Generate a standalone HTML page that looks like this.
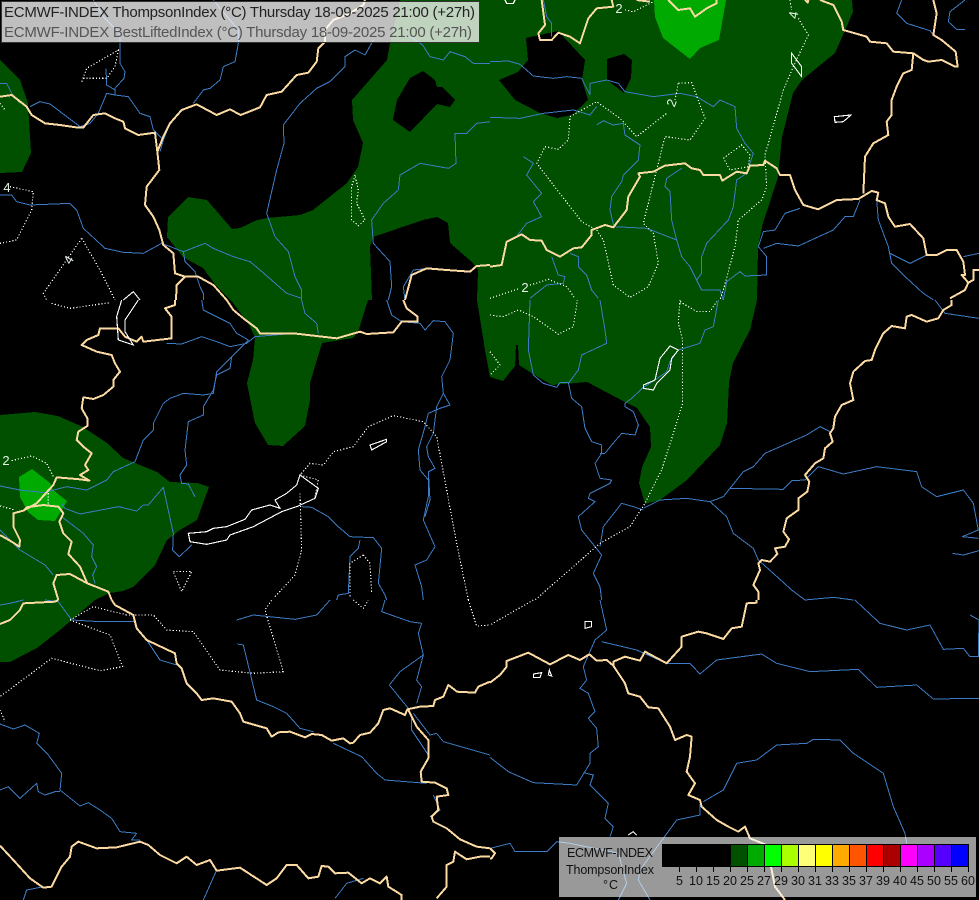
<!DOCTYPE html>
<html><head><meta charset="utf-8"><title>ECMWF-INDEX ThompsonIndex</title>
<style>
html,body{margin:0;padding:0;background:#000;width:979px;height:900px;overflow:hidden}
svg{display:block;position:absolute;left:0;top:0}
text{font-family:"Liberation Sans",sans-serif}
.r path{fill:none;stroke:#3d7cc4;stroke-width:3;stroke-linejoin:round;shape-rendering:crispEdges}
.d path{fill:none;stroke:#fff;stroke-width:3.5;stroke-dasharray:3.5 6;shape-rendering:crispEdges}
.b path{fill:none;stroke:#fbd9a2;stroke-width:6;stroke-linejoin:round;shape-rendering:crispEdges}
.l path{fill:none;stroke:#fff;stroke-width:3.4;shape-rendering:crispEdges}
</style></head><body>
<svg width="979" height="900" viewBox="0 0 979 900" xmlns="http://www.w3.org/2000/svg">
<rect width="979" height="900" fill="#000"/>
<g shape-rendering="crispEdges">
<path fill="#005000" fill-rule="evenodd" d="M400,0 390,43 387,60 352,100 353,120 363,143 358,167 347,183 313,210 300,215 267,218 257,220 240,228 232,229 207,200 188,197 168,217 167,237 183,257 203,268 217,287 233,303 248,323 255,337 253,360 247,383 255,423 268,445 283,446 305,426 310,400 310,383 322,343 353,338 358,332 368,300 372,300 370,247 373,237 423,220 437,217 448,223 450,243 473,263 478,270 477,300 485,350 490,377 503,381 515,366 516,345 518,345 519,365 533,374 552,385 587,382 625,402 637,408 650,427 651,447 642,467 639,483 645,504 660,500 687,480 720,445 727,423 729,383 733,363 750,330 757,300 758,247 763,223 778,177 782,137 793,93 802,80 835,53 853,12 852,0Z
M423,71 435,80 437,87 442,87 455,100 450,107 437,104 410,132 393,120 397,100 410,78Z
M558,31 585,60 582,80 588,100 572,115 557,118 540,113 515,100 499,80 518,72 528,60 526,38Z
M607,59 624,54 632,60 631,78 624,93 607,80Z"/>
<path fill="#00aa00" d="M654,0 655,17 663,38 690,59 700,48 719,40 722,23 726,0Z"/>
<path fill="#005000" d="M0,60 20,80 28,103 31,153 22,172 0,173Z"/>
<path fill="#005000" d="M0,415 35,412 58,416 83,427 107,443 123,458 157,472 170,482 197,483 209,487 197,520 180,530 167,540 155,565 133,587 123,591 110,593 95,600 60,630 37,648 10,662 0,662Z"/>
<path fill="#00aa00" d="M19,477 32,469 50,483 53,490 67,501 60,513 55,521 38,520 28,512 20,497Z"/>
</g>

<!-- zone 1 -->
<g transform="scale(.33333)">
<g class="r">
<path d="M360,130 360,190 375,215 372,235 345,265 345,285 320,280 295,340 270,370 240,380"/>
<path d="M318,205 320,255 345,270"/>
<path d="M345,285 385,290 420,340 450,350 460,390 490,420 480,455"/>
<path d="M90,320 120,305 150,312 240,380"/>
<path d="M640,0 715,90 715,130 705,185 670,200 660,240 630,265 610,270 580,310"/>
<path d="M510,370 490,420"/>
<path d="M1120,120 1095,165 1065,150 1035,170 1035,200 990,245 950,265 900,310 850,375 852,430 830,510 800,640 825,710 865,755 885,830 905,870 905,900"/>
<path d="M0,585 35,585 50,605 90,615 210,610 230,630 250,685 315,745 370,757 430,760 485,730 550,755 615,730 640,745 700,770 750,785 780,810 820,845 860,880 905,895"/>
<path d="M0,250 20,250 35,280 60,310"/>
<path d="M550,755 555,785 585,815 600,860 610,880 610,900"/>
<path d="M1470,190 1420,190 1395,170 1350,155 1330,180 1290,170 1268,135 1230,110"/>
<path d="M1470,365 1430,370 1400,400 1365,400 1368,490 1345,505 1260,490 1200,525 1195,570 1150,610 1115,660 1120,730 1170,785 1175,860 1165,900"/>
<path d="M1215,900 1210,860 1240,810 1290,805"/>
<path d="M360,130 360,100 310,50 280,0"/>
</g>
<g class="d">
<path d="M245,245 260,205 355,150 345,200 320,235 250,235"/>
<path d="M30,560 100,575 95,630 50,720 0,730"/>
<path d="M245,715 130,880 140,900"/>
<path d="M245,715 300,810 345,900"/>
<path d="M1065,525 1055,560 1055,660 1075,677 1095,660 1070,610 1075,570Z"/>
<path d="M0,310 15,330"/>
</g>
<g class="b">
<path d="M0,290 35,285 80,320 95,345 135,370 180,375 235,383 250,383 280,345 315,340 345,355 370,365 375,385 415,405 465,398 472,455 478,510 440,560 435,615 460,650 478,690 490,735 520,760 525,820 555,830 595,830 640,855 680,900"/>
<path d="M472,455 490,410 510,370 545,330 590,313 650,345 690,328 722,345 780,322 800,285 845,275 890,225 925,218 950,185 955,145 975,125 975,90 1000,60 1050,40 1090,15 1095,0"/>
<path d="M555,830 530,855 528,900"/>
<path d="M1215,900 1235,825 1280,805 1340,810 1410,815 1430,798 1470,795"/>
</g>
<g class="l"><path d="M370,900 400,875 420,900"/></g>
</g>

<!-- zone 3 -->
<g transform="translate(490,0) scale(.33333)">
<g class="r">
<path d="M0,185 55,183 90,193 130,228 190,235 230,230 275,235 300,285"/>
<path d="M300,285 300,250 350,240 385,250 405,275 490,290 570,280 620,290 670,320 690,300 735,320 740,385 765,430 790,460 770,520 740,540 730,620 715,660 650,730 635,770 635,820 620,840 635,870 690,870 700,900"/>
<path d="M0,352 90,355 160,340 250,330 300,345 320,320"/>
<path d="M320,375 340,362 370,375 400,370 405,405 450,435 445,480 400,525 395,545 365,590 360,630 372,680"/>
<path d="M372,680 470,685 560,720 545,660 540,575 525,560 530,535 575,505"/>
<path d="M560,720 575,770 600,800 620,840"/>
<path d="M100,470 130,490 110,525 155,580 130,605 155,650 110,670 75,715"/>
<path d="M185,770 205,825 225,830 220,850 170,855 120,895"/>
<path d="M240,760 265,770 265,800 290,825 305,870 325,895"/>
<path d="M700,900 710,845 750,815 765,828 830,825 830,770 805,740 820,695 855,690 885,640 930,625"/>
<path d="M820,745 860,730 925,738 1030,690 1065,650 1090,650 1110,600"/>
<path d="M1160,600 1165,660 1195,740 1205,790 1240,825 1300,880 1330,900"/>
<path d="M1200,760 1260,790 1300,770 1310,765"/>
<path d="M1420,770 1467,760"/>
<path d="M1235,0 1220,40 1250,70 1320,92 1330,105"/>
<path d="M1425,0 1380,35 1375,65 1400,88 1425,88"/>
<path d="M1355,120 1397,155 1403,200"/>
<path d="M160,0 170,50 185,70 185,110"/>
</g>
<g class="d">
<path d="M565,250 605,248 645,355 600,420 525,410 460,670 490,700 505,790 475,860 420,892 370,855 340,720 320,690 275,665 140,490 165,440 205,448 235,420 240,350 320,305 390,355 440,410 530,340"/>
<path d="M555,300 565,250"/>
<path d="M900,0 905,30 M925,55 955,105 910,200 880,270 825,465 830,560 815,600 745,660 735,740 700,870 690,900"/>
<path d="M700,475 755,435 780,465 775,500 720,510 700,475"/>
<path d="M0,895 90,865 M120,855 175,838 230,860 255,895"/>
<path d="M405,30 430,35 490,5"/>
</g>
<g class="b">
<path d="M0,800 35,795 50,725 95,703 120,720 155,722 170,750 210,770 250,745 275,742 305,705 305,690 345,675 370,682 410,630 415,590 450,530 445,520 490,515 525,497 585,490 605,505 630,510 640,525 690,525 697,542 740,515 770,520 780,497 820,495 825,482 860,505 870,525 900,525 915,570 940,615 985,628 1040,600 1105,597 1145,573 1165,578 1160,600 1185,610 1195,650 1215,680 1260,672 1300,715 1310,765 1340,765 1370,750 1400,750 1420,785 1425,825 1415,825 1435,848 1450,840 1450,810 1467,810"/>
<path d="M1435,848 1425,870 1380,895"/>
<path d="M990,0 1030,15 1055,65 1060,90 1130,110 1140,125 1190,130 1210,155 1270,160 1300,180 1315,185 1355,180 1395,200 1403,200 1397,155 1355,120 1330,105 1340,40 1330,0"/>
<path d="M1270,160 1265,210 1240,220 1220,260 1205,300 1205,345 1190,365 1195,405 1150,430 1125,470 1120,580"/>
<path d="M365,0 370,20 320,25 295,55 270,130 240,110 205,98 185,120 150,120 145,100 165,75 155,0"/>
<path d="M535,0 565,30 600,25 615,50 650,25 680,10 680,0"/>
<path d="M440,0 480,5"/>
<path d="M945,0 953,8 955,0"/>
</g>
<g class="l">
<path d="M905,160 905,190 935,230 935,200 920,180Z"/>
<path d="M1033,350 1083,345 1060,365 1035,367Z"/>
<path d="M45,0 50,10 70,10 75,0"/>
</g>
</g>

<!-- zone 4 -->
<g transform="translate(0,300) scale(.33333)">
<g class="r">
<path d="M605,0 610,30 650,50 690,70 710,100 745,120 700,165"/>
<path d="M500,130 545,132 605,110 650,125 690,140 740,130 765,110 880,100"/>
<path d="M745,120 700,165 650,215 640,280 610,285 550,280 510,295 490,310 460,370 460,390 430,420 405,485 340,515 320,540 260,570 200,560 130,578 60,570 0,558"/>
<path d="M695,170 690,205 650,225 640,270 610,320 610,345 565,365 555,450 560,495 540,525 545,550 565,552 585,590"/>
<path d="M185,610 195,625 240,642 355,620 410,633 430,615 445,615 490,562 520,700 518,750 538,770 575,735"/>
<path d="M185,650 250,700 280,735 275,770 290,800 278,825 285,850"/>
<path d="M0,690 60,750 135,795 160,825"/>
<path d="M905,0 915,40 950,70 955,100"/>
<path d="M1160,0 1175,45 1205,65 1260,70 1275,90 1300,62 1335,65 1360,100 1350,180 1325,230 1330,280 1350,315 1320,325 1285,340 1275,380 1255,450 1260,510 1285,540 1285,590 1270,660 1305,740 1280,780 1245,795 1265,860 1270,900"/>
<path d="M1330,280 1310,320 1300,400 1280,440 1285,470 1305,505 1285,515 1290,600 1275,650"/>
<path d="M905,620 935,622 985,650 1015,680 1050,710 1120,713 1145,745 1135,850 1155,885 1160,900"/>
<path d="M1080,720 1075,745 1050,770 1045,880 1015,885 1010,900"/>
</g>
<g class="d">
<path d="M155,10 210,25 330,8"/>
<path d="M1405,900 1370,730 1310,410 1270,365 1180,347 1105,380 1060,440 1000,455 970,495 930,490 900,525 955,540 945,590"/>
<path d="M900,580 905,750 885,825 825,890"/>
<path d="M1090,765 1050,790 1050,890"/>
<path d="M1090,765 1110,790 1115,880"/>
<path d="M520,815 575,815 545,875Z"/>
<path d="M35,482 95,468 140,490 160,530"/>
<path d="M0,618 45,630"/>
<path d="M145,570 145,610"/>
</g>
<g class="b">
<path d="M680,0 700,30 730,55 770,85 780,100 880,100 1010,115 1080,95 1100,102 1180,97 1205,65 1253,65 1253,50 1220,25 1210,0"/>
<path d="M525,0 525,15 495,25 515,50 515,115 430,125 425,110 410,125 375,110 355,85 300,85 295,105 260,120 245,135 290,155 335,165 345,190 360,215 340,240 340,260 310,285 280,297 250,292 245,325 262,355 262,378 235,395 230,420 250,440 275,460 255,495 265,510 240,525 268,542 240,538 170,532 160,555 110,610 70,632 40,640 40,680 60,720 58,740 35,725 0,705"/>
<path d="M70,632 80,622 130,615 175,620 190,640 178,665 190,700 215,725 205,762 240,800 262,850"/>
<path d="M175,900 160,850 170,825 210,822 262,850 325,875 335,900"/>
</g>
<g class="l">
<path d="M565,700 570,725 620,733 680,720 690,705 760,680 845,635 890,620 945,595 955,565 900,525 890,555 860,580 825,600 840,625 810,615 755,630 735,658 680,680 640,685 620,695Z"/>
<path d="M1110,435 1160,418 1160,425 1115,450Z"/>
<path d="M365,0 350,50 355,120 400,135 375,95 375,60 415,0"/>
</g>
</g>

<!-- zone 5 -->
<g transform="translate(490,300) scale(.33333)">
<g class="r">
<path d="M120,0 115,150 130,225 160,250 200,262 210,248 235,247 245,295 275,320 285,385 305,425 335,435 335,460 315,490 330,535 365,540 360,550 300,580 295,595 315,605 265,650 275,690 315,740 335,765 310,820 330,860 335,900"/>
<path d="M330,0 345,90 350,130 275,165 265,210 235,250"/>
<path d="M685,0 670,80 645,90 630,130 565,150 540,185 530,215 495,240 460,262 425,295 405,310 405,320 430,335 445,375 435,405 395,400 365,435 345,460 330,460"/>
<path d="M510,600 590,595 660,605 700,590 720,565 880,568 905,542 945,540 985,500 1060,522 1160,500 1280,515 1295,560 1340,590 1420,570 1450,610 1465,690 1417,710 1465,715"/>
<path d="M720,565 760,515 790,500 825,460 950,405 990,380 1020,395"/>
<path d="M660,605 710,650 730,700 790,745 805,780 850,820 905,870 945,900 1030,892 1090,900"/>
<path d="M460,630 430,620 395,610 340,680 330,740"/>
<path d="M510,600 460,625"/>
<path d="M1335,0 1365,40 1467,55"/>
<path d="M1387,760 1420,765 1467,752"/>
</g>
<g class="d">
<path d="M0,45 40,50 85,30 130,50 205,103 250,80 262,0"/>
<path d="M0,155 30,195 0,225"/>
<path d="M570,0 565,70 578,120 578,310 515,510 465,610 420,680 330,730 135,900"/>
<path d="M570,5 620,35 660,35 680,5"/>
</g>
<g class="b">
<path d="M1385,0 1385,15 1360,30 1345,55 1310,65 1265,45 1250,50 1245,85 1205,78 1180,100 1155,150 1145,180 1125,183 1090,215 1080,250 1090,300 1055,315 1035,350 1030,385 1020,400 1028,425 1005,445 1000,475 975,490 945,525 958,545 952,575 925,595 925,630 890,655 880,695 897,718 885,740 855,745 862,762 840,785 815,780 805,790 810,810 790,855 805,875 805,900"/>
</g>
<g class="l">
<path d="M540,138 510,175 495,240 460,255 460,265 490,270 500,250 540,210 545,175 565,150Z"/>
</g>
</g>

<!-- zone 6 -->
<g transform="translate(0,600) scale(.33333)">
<g class="r">
<path d="M0,15 30,10 70,0"/>
<path d="M135,0 175,5 215,60 300,65 405,65"/>
<path d="M710,60 760,45 885,58 950,45 990,0"/>
<path d="M1155,0 1145,35 1230,65 1265,70 1255,100 1270,165 1250,240 1265,260 1250,310"/>
<path d="M1270,165 1200,215 1168,255 1225,325"/>
<path d="M712,132 730,135 770,300 820,320 860,340 900,385 940,395"/>
<path d="M0,372 40,387 75,375 118,400 110,430 145,465 185,520 180,570 240,618 265,608 300,630 335,655 360,695 410,700 395,720 420,720"/>
<path d="M0,570 25,560 60,595 110,550 115,575 135,585 165,575 180,575"/>
<path d="M1000,430 1085,470 1130,520 1155,540 1280,550"/>
<path d="M1235,355 1235,390 1285,465"/>
<path d="M1240,340 1290,405 1310,400 1330,425 1470,465"/>
<path d="M70,900 80,870 130,860"/>
<path d="M610,900 650,810"/>
<path d="M1005,895 1040,850 1090,835"/>
<path d="M1300,585 1320,630 1290,650"/>
<path d="M440,120 480,180 530,195"/>
</g>
<g class="d">
<path d="M210,60 330,105 368,200 300,212 155,175 0,290"/>
<path d="M210,60 280,20 380,45 460,45 500,90 580,95 660,210 760,220 850,215 795,30 815,0"/>
<path d="M0,330 15,365"/>
<path d="M1060,0 1090,25 1105,0"/>
<path d="M1405,0 1430,78 1470,75"/>
</g>
<g class="b">
<path d="M335,0 345,15 400,45 410,85 440,120 525,160 530,190 545,205 560,250 590,280 605,300 640,295 695,305 720,340 730,365 800,385 815,410 835,397 870,395 915,412 935,402 965,405 995,422 1030,415 1050,430 1060,428 1080,405 1110,398 1135,370 1150,330 1170,325 1215,345 1222,328 1260,320 1300,318 1305,300 1330,290 1345,255 1365,270 1370,275 1425,278 1435,260 1470,245"/>
<path d="M1225,330 1250,380 1285,420 1285,475 1262,515 1265,545 1305,548 1340,565 1345,585 1310,590 1315,630 1295,650 1300,665 1340,685 1380,718 1430,740 1470,745"/>
<path d="M0,737 40,780 90,835 130,863 155,860 185,800 210,770 215,740 235,725 290,745 350,742 420,725 445,735 480,765 530,790 560,770 590,795 630,780 650,812 720,803 800,855 830,835 860,795 890,795 925,835 955,830 965,798 985,800 1005,820 1045,818 1085,850 1110,835 1140,850 1160,830 1165,860 1205,885 1205,900"/>
<path d="M1310,895 1340,860 1340,795 1360,785 1365,755 1400,778 1440,770 1470,770"/>
<path d="M175,0 165,5 70,10 60,30 30,60 0,72"/>
</g>
</g>

<!-- zone 7 -->
<g transform="translate(490,600) scale(.33333)">
<g class="r">
<path d="M330,0 350,90 315,120 280,200 290,240 270,265 295,280 315,335 295,355 320,385 325,440 300,460 300,490 260,555 130,548 55,515 0,472"/>
<path d="M335,125 440,150 530,190 600,190 630,222 680,180 815,162 860,190 960,215 1105,208 1160,262 1280,255 1330,297 1467,295"/>
<path d="M1095,0 1170,70 1250,90 1320,75 1360,148 1420,145 1440,170 1467,170"/>
<path d="M1440,45 1467,60 1465,170"/>
<path d="M280,518 310,525 300,555 355,610 345,655 370,680 360,710"/>
<path d="M640,605 700,570 740,490 800,480 860,435 950,430 970,418 1050,420 1090,460 1180,520 1210,620 1245,700 1250,730"/>
<path d="M630,610 630,645 560,660 520,715 450,810 445,840 480,900"/>
<path d="M0,745 60,730 75,755 170,755 200,725 240,730 385,760 410,850 390,890 385,900"/>
</g>
<g class="d"><path d="M130,0 0,75"/></g>
<g class="b">
<path d="M0,248 30,225 50,200 50,183 115,158 180,193 235,165 270,180 298,163 320,182 350,180 370,197 405,250 415,280 450,290 475,322 505,325 540,380 555,420 590,405 605,410 600,470 590,515 615,550 595,585 630,600 635,620 680,660 715,680 745,695 765,680 780,715 830,735 855,860 885,900"/>
<path d="M370,197 370,185 405,170 450,182 465,155 530,190 575,140 575,110 625,95 650,100 700,117 725,85 755,80 770,10 800,8 800,0"/>
<path d="M0,745 15,760 5,775 0,775"/>
</g>
<g class="l">
<path d="M285,65 305,65 305,80 285,85Z"/>
<path d="M130,222 155,218 150,232 130,232Z"/>
<path d="M178,210 185,228 175,225Z"/>
<path d="M415,705 430,695 440,705"/>
</g>
</g>

<!-- contour labels -->
<g font-size="13" fill="#e8f0e8" text-anchor="middle">
<text x="7" y="192">4</text>
<text x="6" y="465">2</text>
<text x="525" y="292">2</text>
<text x="619" y="13">2</text>
<text transform="translate(672,103) rotate(-70)" y="4">2</text>
<text transform="translate(794,15) rotate(-80)" y="4">4</text>
<text transform="translate(69,260) rotate(-60)" y="4">4</text>
</g>

<!-- title -->
<rect x="1.5" y="1.5" width="478" height="41" fill="#fff" fill-opacity=".75" stroke="#333" stroke-width="1"/>
<text x="4" y="17" font-size="15" fill="#222" textLength="471" lengthAdjust="spacing">ECMWF-INDEX ThompsonIndex (°C) Thursday 18-09-2025 21:00 (+27h)</text>
<text x="4" y="37" font-size="15" fill="#555" textLength="468" lengthAdjust="spacing">ECMWF-INDEX BestLiftedIndex (°C) Thursday 18-09-2025 21:00 (+27h)</text>

<!-- legend -->
<rect x="559" y="837" width="417" height="60" fill="#fff" fill-opacity=".6"/>
<g shape-rendering="crispEdges" stroke="#000" stroke-width="1">
<rect x="662.5" y="844.5" width="68" height="22" fill="#000"/>
<rect x="730.5" y="844.5" width="17" height="22" fill="#005000"/>
<rect x="747.5" y="844.5" width="17" height="22" fill="#00aa00"/>
<rect x="764.5" y="844.5" width="17" height="22" fill="#00ff00"/>
<rect x="781.5" y="844.5" width="17" height="22" fill="#aaff00"/>
<rect x="798.5" y="844.5" width="17" height="22" fill="#ffff77"/>
<rect x="815.5" y="844.5" width="17" height="22" fill="#ffff00"/>
<rect x="832.5" y="844.5" width="17" height="22" fill="#ffaa00"/>
<rect x="849.5" y="844.5" width="17" height="22" fill="#ff5500"/>
<rect x="866.5" y="844.5" width="17" height="22" fill="#ff0000"/>
<rect x="883.5" y="844.5" width="17" height="22" fill="#aa0000"/>
<rect x="900.5" y="844.5" width="17" height="22" fill="#ff00ff"/>
<rect x="917.5" y="844.5" width="17" height="22" fill="#aa00ff"/>
<rect x="934.5" y="844.5" width="17" height="22" fill="#5500ff"/>
<rect x="951.5" y="844.5" width="17" height="22" fill="#0000ff"/>
<path fill="none" d="M679.5,867V872M696.5,867V872M713.5,867V872M730.5,867V872M747.5,867V872M764.5,867V872M781.5,867V872M798.5,867V872M815.5,867V872M832.5,867V872M849.5,867V872M866.5,867V872M883.5,867V872M900.5,867V872M917.5,867V872M934.5,867V872M951.5,867V872M968.5,867V872"/>
</g>
<g font-size="12.5" fill="#111" text-anchor="middle">
<text x="679.5" y="885">5</text><text x="696" y="885">10</text><text x="713" y="885">15</text><text x="730" y="885">20</text><text x="747" y="885">25</text><text x="764" y="885">27</text><text x="781" y="885">29</text><text x="798" y="885">30</text><text x="815" y="885">31</text><text x="832" y="885">33</text><text x="849" y="885">35</text><text x="866" y="885">37</text><text x="883" y="885">39</text><text x="900" y="885">40</text><text x="917" y="885">45</text><text x="934" y="885">50</text><text x="951" y="885">55</text><text x="968" y="885">60</text>
</g>
<g fill="#111">
<text x="567" y="857" font-size="12.5" textLength="86" lengthAdjust="spacing">ECMWF-INDEX</text>
<text x="566" y="874" font-size="12.5" textLength="88" lengthAdjust="spacing">ThompsonIndex</text>
<text x="603" y="889" font-size="12.5" textLength="15" lengthAdjust="spacing">°C</text>
</g>
</svg>
</body></html>
